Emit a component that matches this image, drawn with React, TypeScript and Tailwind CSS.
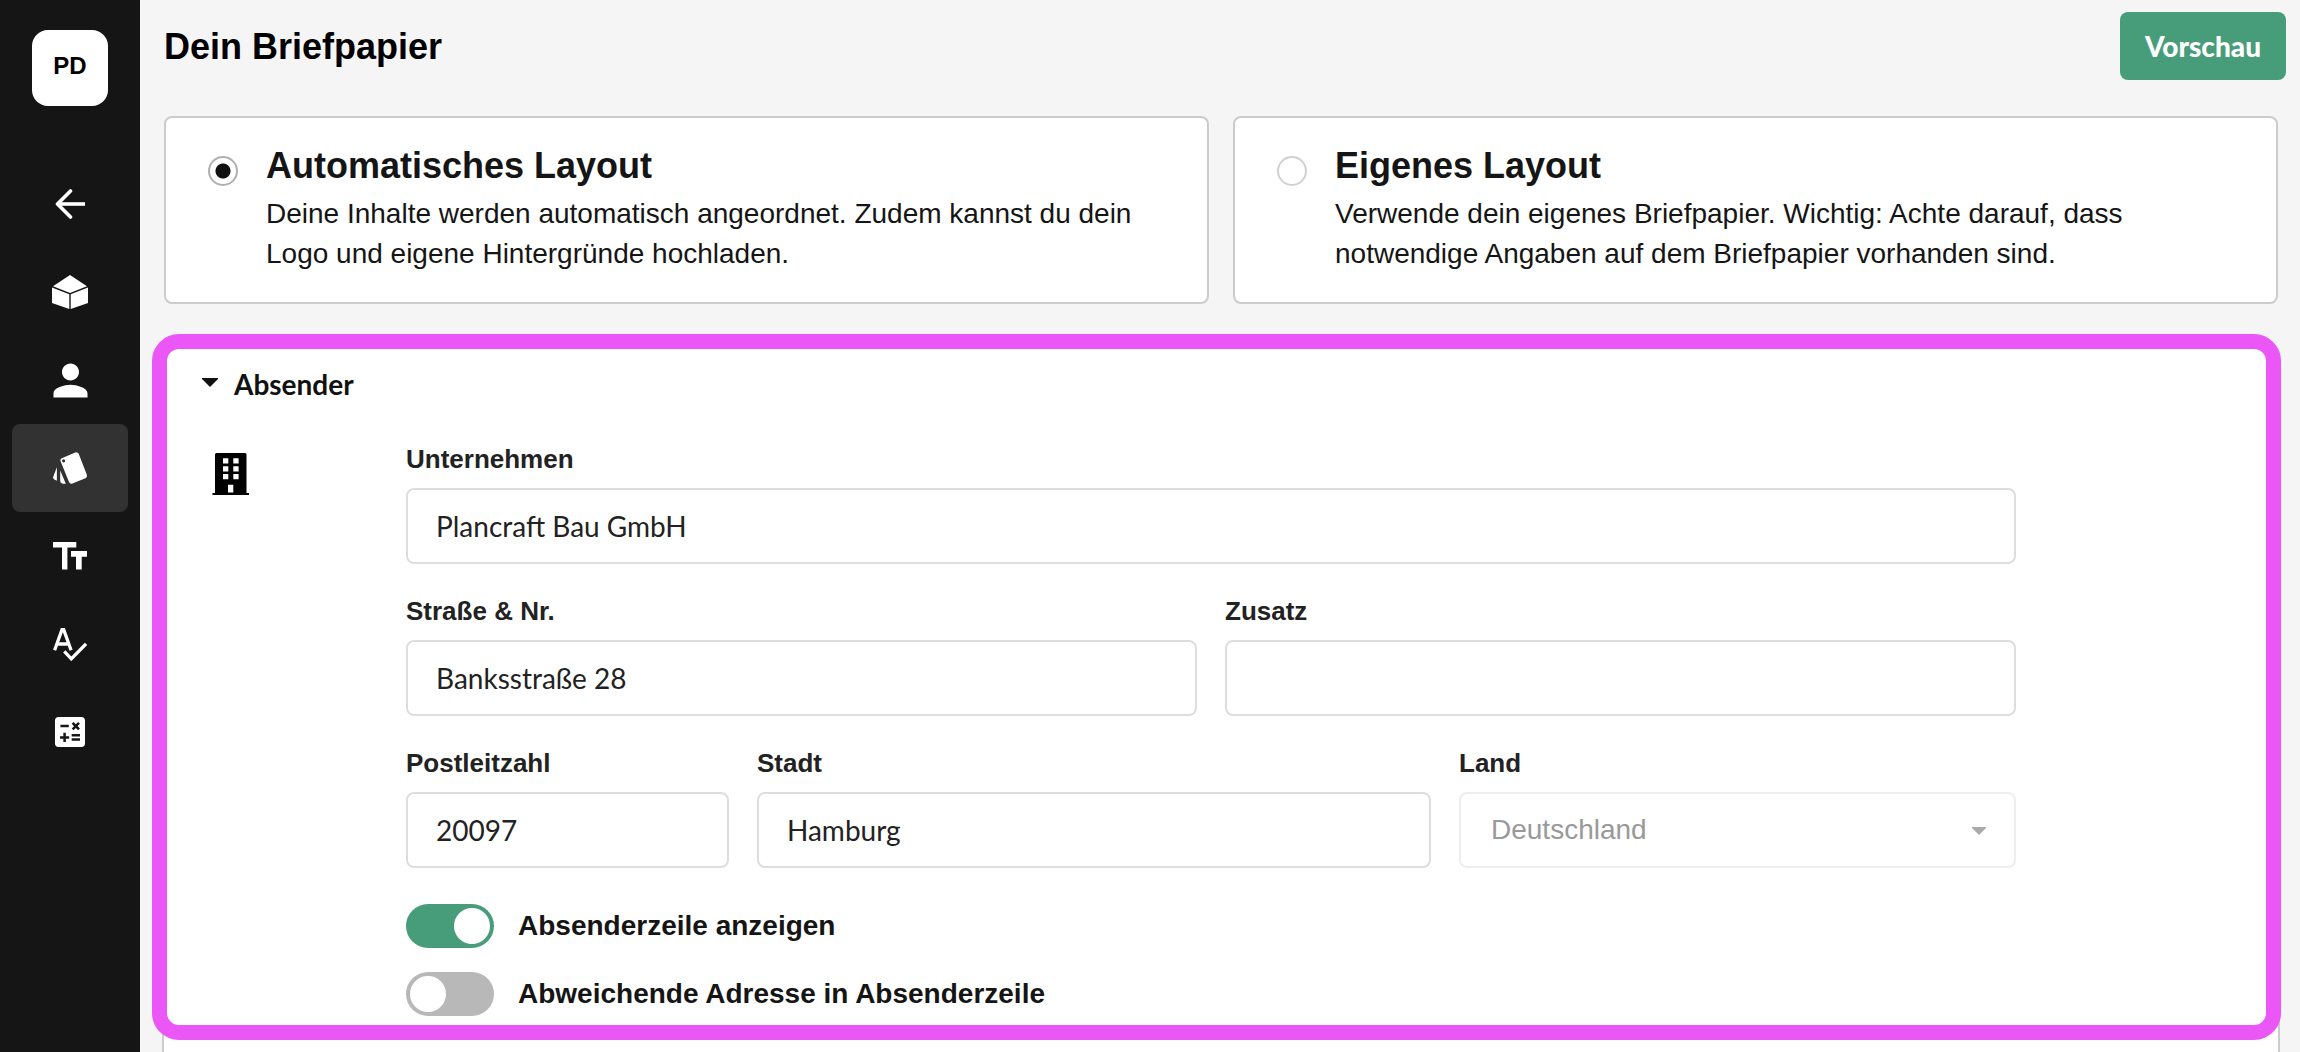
import { useState } from 'react';
import type { ReactNode } from 'react';
import { MdCalculate, MdPerson } from 'react-icons/md';

function BackIcon() {
  return (
    <svg width="30" height="30" viewBox="0 0 30 30" fill="none" stroke="currentColor" strokeWidth="3.6" aria-hidden="true">
      <path d="M15.5 2 2.500 15l13 13" strokeLinecap="round" strokeLinejoin="round" />
      <path d="M3 15h27" />
    </svg>
  );
}

function BoxIcon() {
  return (
    <svg width="36" height="34" viewBox="0 0 36 34" fill="currentColor" aria-hidden="true">
      <path d="M18 0 35 11.300 18 18 1 11.300z" />
      <path d="M0 12.500 17.300 19.300V34L0 28z" />
      <path d="M36 12.500 18.700 19.300V34L36 28z" />
    </svg>
  );
}

function CardsIcon() {
  return (
    <svg width="34" height="32" viewBox="0 0 34 32" fill="currentColor" aria-hidden="true">
      <path
        fillRule="evenodd"
        d="M8.800 6.200 22.200.400Q24.600-.400 25.700 1.800L33.700 22.600Q34.600 25 32.400 26.200L19.400 31.500Q17 32.200 16 30L7.600 9.200Q6.800 7 8.800 6.200zM10.600 7.200a1.600 1.600 0 1 0 0 3.200 1.600 1.600 0 0 0 0-3.200z"
      />
      <path d="M3.900 15.300V28.800L1.500 27.600Q-.300 26.600.300 24.600z" />
      <path d="M7.200 18.600 12.800 31.800H10Q7.200 31.400 7.200 28.600z" />
    </svg>
  );
}

function TextSizeIcon() {
  return (
    <svg width="34" height="28" viewBox="0 0 34 28" fill="currentColor" aria-hidden="true">
      <path d="M0 0h23.300v5.600h-8.900V27.500H9V5.600H0z" />
      <path d="M18 9h16v5.700h-5.300v12.800H23V14.700h-5z" />
    </svg>
  );
}

function SpellcheckIcon() {
  return (
    <svg width="34" height="33" viewBox="0 0 34 33" fill="none" stroke="currentColor" strokeWidth="3.3" aria-hidden="true">
      <path d="M1.600 22.300 9 1.700h1.700l7.400 20.600M4.500 16h10.800" />
      <path d="M11.300 23.300l7 7.500L33 15.800" />
    </svg>
  );
}

function BuildingIcon() {
  return (
    <svg width="38" height="42" viewBox="0 0 38 42" aria-hidden="true">
      <path
        fillRule="evenodd"
        d="M4.500 0h28.500q1.500 0 1.500 1.500V40H37v2H.500V40H3V1.500Q3 0 4.500 0zM11 5.300v5.200h5.300V5.300zM21.300 5.300v5.200h5.300V5.300zM11 13.200v5.200h5.300v-5.200zM21.300 13.200v5.200h5.300v-5.200zM11 21v5.300h5.300V21zM21.300 21v5.300h5.300V21zM16 31.800v7.700h5.300v-7.700z"
      />
    </svg>
  );
}

const navItems: { label: string; icon: ReactNode; active?: boolean }[] = [
  { label: 'Zurück', icon: <BackIcon /> },
  { label: 'Artikel', icon: <BoxIcon /> },
  { label: 'Profil', icon: <MdPerson size={51} /> },
  { label: 'Briefpapier', icon: <CardsIcon />, active: true },
  { label: 'Texte', icon: <TextSizeIcon /> },
  { label: 'Rechtschreibung', icon: <SpellcheckIcon /> },
  { label: 'Kalkulation', icon: <MdCalculate size={40} /> },
];

function Sidebar() {
  return (
    <aside className="flex w-[140px] shrink-0 flex-col items-center bg-[#151515] pt-[30px]">
      <div className="mb-[54px] flex size-[76px] items-center justify-center rounded-2xl bg-white pb-1 text-2xl font-bold text-black">
        PD
      </div>
      <nav className="flex w-full flex-col px-3">
        {navItems.map((item) => (
          <a
            key={item.label}
            href="#"
            aria-label={item.label}
            className={`flex h-[88px] items-center justify-center rounded-lg text-white ${item.active ? 'bg-[#323232]' : ''}`}
          >
            {item.icon}
          </a>
        ))}
      </nav>
    </aside>
  );
}

type LayoutOptionProps = {
  title: string;
  text: string;
  checked: boolean;
  onChange: () => void;
};

function LayoutOption({ title, text, checked, onChange }: LayoutOptionProps) {
  return (
    <label className="flex flex-1 gap-7 rounded-lg border-2 border-[#cccccc] bg-white px-[42px] pt-6 pb-7 text-[#151515]">
      <input
        type="radio"
        name="layout"
        checked={checked}
        onChange={onChange}
        className="mt-[14px] size-[30px] shrink-0 appearance-none rounded-full border-2 border-[#d0d0d0] bg-white checked:border-[#b0b0b0] checked:bg-[radial-gradient(circle,#111_0_7px,transparent_8px)]"
      />
      <span className="block">
        <span className="mb-1 block text-4xl leading-[48px] font-bold">{title}</span>
        <span className="block text-[28px] leading-10">{text}</span>
      </span>
    </label>
  );
}

type FieldProps = {
  id: string;
  label: string;
  value?: string;
  className: string;
};

const labelClass = 'mb-[14px] block text-[26px] leading-[30px] font-bold text-[#222222]';

function Field({ id, label, value, className }: FieldProps) {
  return (
    <div className={className}>
      <label htmlFor={id} className={labelClass}>{label}</label>
      <input
        id={id}
        type="text"
        defaultValue={value}
        className="block h-[76px] w-full rounded-lg border-2 border-[#dddddd] bg-white px-7 font-[Lato,sans-serif] text-[28px] text-[#222222]"
      />
    </div>
  );
}

function Toggle({ label, initial }: { label: string; initial: boolean }) {
  const [on, setOn] = useState(initial);
  return (
    <label className="flex items-center gap-6 text-[28px] leading-[44px] font-bold text-[#151515]">
      <input
        type="checkbox"
        role="switch"
        checked={on}
        onChange={() => setOn(!on)}
        className="flex h-11 w-[88px] shrink-0 appearance-none rounded-full bg-[#b8b8b8] p-1 before:size-9 before:rounded-full before:bg-white checked:justify-end checked:bg-[#479d7a]"
      />
      {label}
    </label>
  );
}

export default function App() {
  const [layout, setLayout] = useState('auto');

  return (
    <div className="flex h-screen overflow-hidden bg-[#f5f5f5] font-['Liberation_Sans',Arial,sans-serif]">
      <Sidebar />
      <main className="flex min-w-0 flex-1 flex-col">
        <header className="flex items-start justify-between pt-3 pr-[14px] pl-6">
          <h1 className="text-4xl leading-[70px] font-bold text-black">Dein Briefpapier</h1>
          <button
            type="button"
            className="h-[68px] rounded-lg bg-[#479d7a] px-[25px] font-[Lato,sans-serif] text-[28px] font-black text-white"
          >
            Vorschau
          </button>
        </header>

        <div className="mt-[34px] flex gap-6 pr-[22px] pl-6">
          <LayoutOption
            title="Automatisches Layout"
            text="Deine Inhalte werden automatisch angeordnet. Zudem kannst du dein Logo und eigene Hintergründe hochladen."
            checked={layout === 'auto'}
            onChange={() => setLayout('auto')}
          />
          <LayoutOption
            title="Eigenes Layout"
            text="Verwende dein eigenes Briefpapier. Wichtig: Achte darauf, dass notwendige Angaben auf dem Briefpapier vorhanden sind."
            checked={layout === 'custom'}
            onChange={() => setLayout('custom')}
          />
        </div>

        <section className="relative mt-10 mr-5 ml-[22px] flex-1 rounded-t-xl border-2 border-b-0 border-[#cccccc] bg-white">
          <button
            type="button"
            className="mt-[18px] ml-[38px] flex h-10 items-center gap-4 font-[Lato,sans-serif] text-[28px] font-bold text-[#111111]"
          >
            <svg width="16" height="9" viewBox="0 0 16 9" className="mb-1" fill="currentColor" aria-hidden="true">
              <path d="M0 0h16v1L8 9 0 1z" />
            </svg>
            Absender
          </button>

          <div className="mt-10 flex pr-[262px] pl-12">
            <div className="w-[194px] shrink-0 pt-[9px]">
              <BuildingIcon />
            </div>
            <div className="min-w-0 flex-1">
              <div className="grid grid-cols-14 gap-x-7 gap-y-8">
                <Field id="company" label="Unternehmen" value="Plancraft Bau GmbH" className="col-span-14" />
                <Field id="street" label="Straße & Nr." value="Banksstraße 28" className="col-span-7" />
                <Field id="extra" label="Zusatz" className="col-span-7" />
                <Field id="zip" label="Postleitzahl" value="20097" className="col-span-3" />
                <Field id="city" label="Stadt" value="Hamburg" className="col-span-6" />
                <div className="col-span-5">
                  <label htmlFor="country" className={labelClass}>Land</label>
                  <div className="relative">
                    <select
                      id="country"
                      disabled
                      className="block h-[76px] w-full appearance-none rounded-lg border-2 border-[#eeeeee] bg-white px-[30px] text-[28px] text-[#999999] opacity-100"
                    >
                      <option>Deutschland</option>
                    </select>
                    <svg width="14" height="8" viewBox="0 0 14 8" className="pointer-events-none absolute top-[35px] right-[30px] text-[#aaaaaa]" fill="currentColor" aria-hidden="true">
                      <path d="M0 0h14v1L7 8 0 1z" />
                    </svg>
                  </div>
                </div>
              </div>
              <div className="mt-9 flex flex-col gap-6">
                <Toggle label="Absenderzeile anzeigen" initial={true} />
                <Toggle label="Abweichende Adresse in Absenderzeile" initial={false} />
              </div>
            </div>
          </div>

          {/* highlight frame around the sender block */}
          <div className="pointer-events-none absolute -top-3 -right-[3px] bottom-3 -left-3 rounded-[27px] border-[15px] border-[#eb57f7]" />
        </section>
      </main>
    </div>
  );
}
